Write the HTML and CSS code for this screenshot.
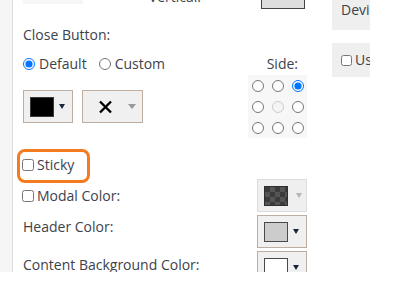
FILE: index.html
```html
<!DOCTYPE html>
<html lang="en">
<head>
  <meta charset="UTF-8">
  <meta name="viewport" content="width=device-width, initial-scale=1.0">
  <title>Modal Settings</title>
  <link rel="stylesheet" href="styles.css">
</head>
<body>

  <div class="frame">
    <div class="gutter"></div>

    <div class="panel">
      <!-- Position row (scrolled partly out of view) -->
      <div class="row-top">
        <div class="top-box"></div>
        <span class="top-label">Vertical:</span>
        <div class="top-swatch"></div>
      </div>

      <!-- Close button -->
      <div class="close-block">
        <div class="close-main">
          <div class="field-label">Close Button:</div>
          <div class="radio-row">
            <label class="radio"><input type="radio" name="close" checked>Default</label>
            <label class="radio"><input type="radio" name="close">Custom</label>
          </div>
          <div class="btn-row">
            <button class="color-btn"><span class="swatch swatch-black"></span><span class="caret"></span></button>
            <button class="icon-btn">
              <svg class="x-icon" width="15" height="14" viewBox="0 0 15 14">
                <path d="M2 1.5 L13 12.5 M13 1.5 L2 12.5" stroke="#000" stroke-width="2.4" fill="none"/>
              </svg>
              <span class="caret caret-gray"></span>
            </button>
          </div>
        </div>

        <div class="side">
          <div class="side-label">Side:</div>
          <div class="side-grid">
            <input type="radio" name="side">
            <input type="radio" name="side">
            <input type="radio" name="side" checked>
            <input type="radio" name="side">
            <input type="radio" name="side" disabled>
            <input type="radio" name="side">
            <input type="radio" name="side">
            <input type="radio" name="side">
            <input type="radio" name="side">
          </div>
        </div>
      </div>

      <!-- Sticky -->
      <div class="sticky-row">
        <label class="check"><input type="checkbox">Sticky</label>
      </div>

      <!-- Colors -->
      <div class="color-row row-modal">
        <label class="check"><input type="checkbox">Modal Color:</label>
        <button class="color-btn is-disabled" disabled><span class="swatch swatch-checker"></span><span class="caret caret-light"></span></button>
      </div>
      <div class="color-row row-header">
        <span class="row-label">Header Color:</span>
        <button class="color-btn"><span class="swatch swatch-gray"></span><span class="caret"></span></button>
      </div>
      <div class="color-row row-content">
        <span class="row-label">Content Background Color:</span>
        <button class="color-btn"><span class="swatch swatch-white"></span><span class="caret"></span></button>
      </div>
    </div>

    <div class="aside">
      <div class="tab tab-first">Devices</div>
      <div class="tab tab-check"><input type="checkbox">Use global</div>
    </div>
  </div>

</body>
</html>
```

FILE: styles.css
```css
body {
  margin: 0;
  background-color: white;
  font-family: "Open Sans", Arial, sans-serif;
  font-size: 14px;
  line-height: 20px;
  color: #3d424b;
}

.frame {
  display: flex;
  width: 400px;
  height: 272px;
  overflow: hidden;
}

.gutter {
  width: 13px;
  flex-shrink: 0;
  background-color: #f6f6f6;
  border-right: 1px solid #dcdcdc;
  box-sizing: border-box;
}

.panel {
  width: 284px;
  flex-shrink: 0;
  padding-left: 10px;
}

/* top row, only its bottom edge is visible */
.row-top {
  display: flex;
  align-items: flex-end;
  height: 30px;
  margin-top: -21px;
}

.top-box {
  width: 60px;
  height: 20px;
  margin-bottom: 5px;
  background-color: #f6f6f6;
}

.top-label {
  width: 118px;
  text-align: right;
  margin-bottom: 2px;
}

.top-swatch {
  width: 44px;
  height: 30px;
  margin-left: 60px;
  box-sizing: border-box;
  border: 1px solid #444;
  background-color: #dedede;
}

/* close button block */
.close-block {
  display: flex;
  justify-content: space-between;
  margin-top: 16px;
}

.radio-row {
  display: flex;
  gap: 12px;
  margin-top: 9px;
}

.radio,
.check {
  display: flex;
  align-items: center;
}

input[type="radio"] {
  width: 12px;
  height: 12px;
  margin: 0 4px 0 0;
}

input[type="checkbox"] {
  width: 12px;
  height: 12px;
  margin: 0 3px 0 -1px;
}

.btn-row {
  display: flex;
  gap: 9px;
  margin-top: 16px;
}

.color-btn,
.icon-btn {
  display: flex;
  align-items: center;
  height: 33px;
  padding: 0 0 0 6px;
  box-sizing: border-box;
  border: 1px solid #bfae9f;
  border-radius: 0;
  background-color: #f0f0f0;
}

.color-btn {
  width: 50px;
}

.icon-btn {
  width: 61px;
  padding-left: 15px;
}

.swatch {
  width: 24px;
  height: 20px;
  box-sizing: border-box;
  border: 1px solid #3a3a3a;
}

.swatch-black {
  background-color: #000;
}

.swatch-gray {
  background-color: #cccccc;
  border-color: #4a4a4a;
}

.swatch-white {
  background-color: #fff;
  border-color: #4a4a4a;
}

.swatch-checker {
  border-color: #2e2e2e;
  background-color: #3c3c3c;
  background-image: conic-gradient(#555 25%, #3c3c3c 0 50%, #555 0 75%, #3c3c3c 0);
  background-size: 10px 10px;
}

.caret {
  width: 0;
  height: 0;
  margin-left: 5px;
  border-left: 3px solid transparent;
  border-right: 3px solid transparent;
  border-top: 5px solid #1c2540;
}

.caret-gray {
  margin-left: 15px;
  border-left-width: 4px;
  border-right-width: 4px;
  border-top-color: #999;
}

.caret-light {
  margin-left: 8px;
  border-top-color: #b5b5b5;
}

.x-icon {
  display: block;
}

/* side picker */
.side {
  width: 59px;
}

.side-label {
  padding-top: 29px;
  padding-right: 9px;
  text-align: right;
}

.side-grid {
  display: grid;
  grid-template-columns: repeat(3, 20px);
  grid-auto-rows: 21px;
  place-items: center;
  width: 59px;
  margin-top: 1px;
  background-color: #f7f7f7;
}

.side-grid input[type="radio"] {
  margin: 0;
}

/* sticky with highlight */
.sticky-row {
  position: relative;
  margin-top: 17px;
}

.sticky-row::after {
  content: "";
  position: absolute;
  top: -6px;
  left: -6px;
  width: 73px;
  height: 34px;
  box-sizing: border-box;
  border: 3px solid #f47b20;
  border-radius: 8px;
}

/* colour rows */
.color-row {
  display: flex;
  justify-content: space-between;
  align-items: center;
  margin-top: 3px;
}

.row-modal {
  margin-top: 4px;
}

.color-btn.is-disabled {
  border-color: #dcdcdc;
  background-color: #efefef;
}

.row-header .row-label {
  margin-top: -10px;
}

.row-content .row-label {
  margin-top: -6px;
}

/* right side tabs */
.aside {
  width: 38px;
  margin-left: 25px;
  flex-shrink: 0;
  overflow: hidden;
}

.tab {
  width: 120px;
  background-color: #efefef;
  box-sizing: border-box;
  padding-left: 9px;
}

.tab-first {
  height: 40px;
  margin-top: -10px;
  padding-top: 10px;
}

.tab-check {
  display: flex;
  align-items: center;
  height: 34px;
  margin-top: 13px;
}

.tab-check input[type="checkbox"] {
  width: 11px;
  height: 11px;
  margin: 0 3px 0 0;
}
```
